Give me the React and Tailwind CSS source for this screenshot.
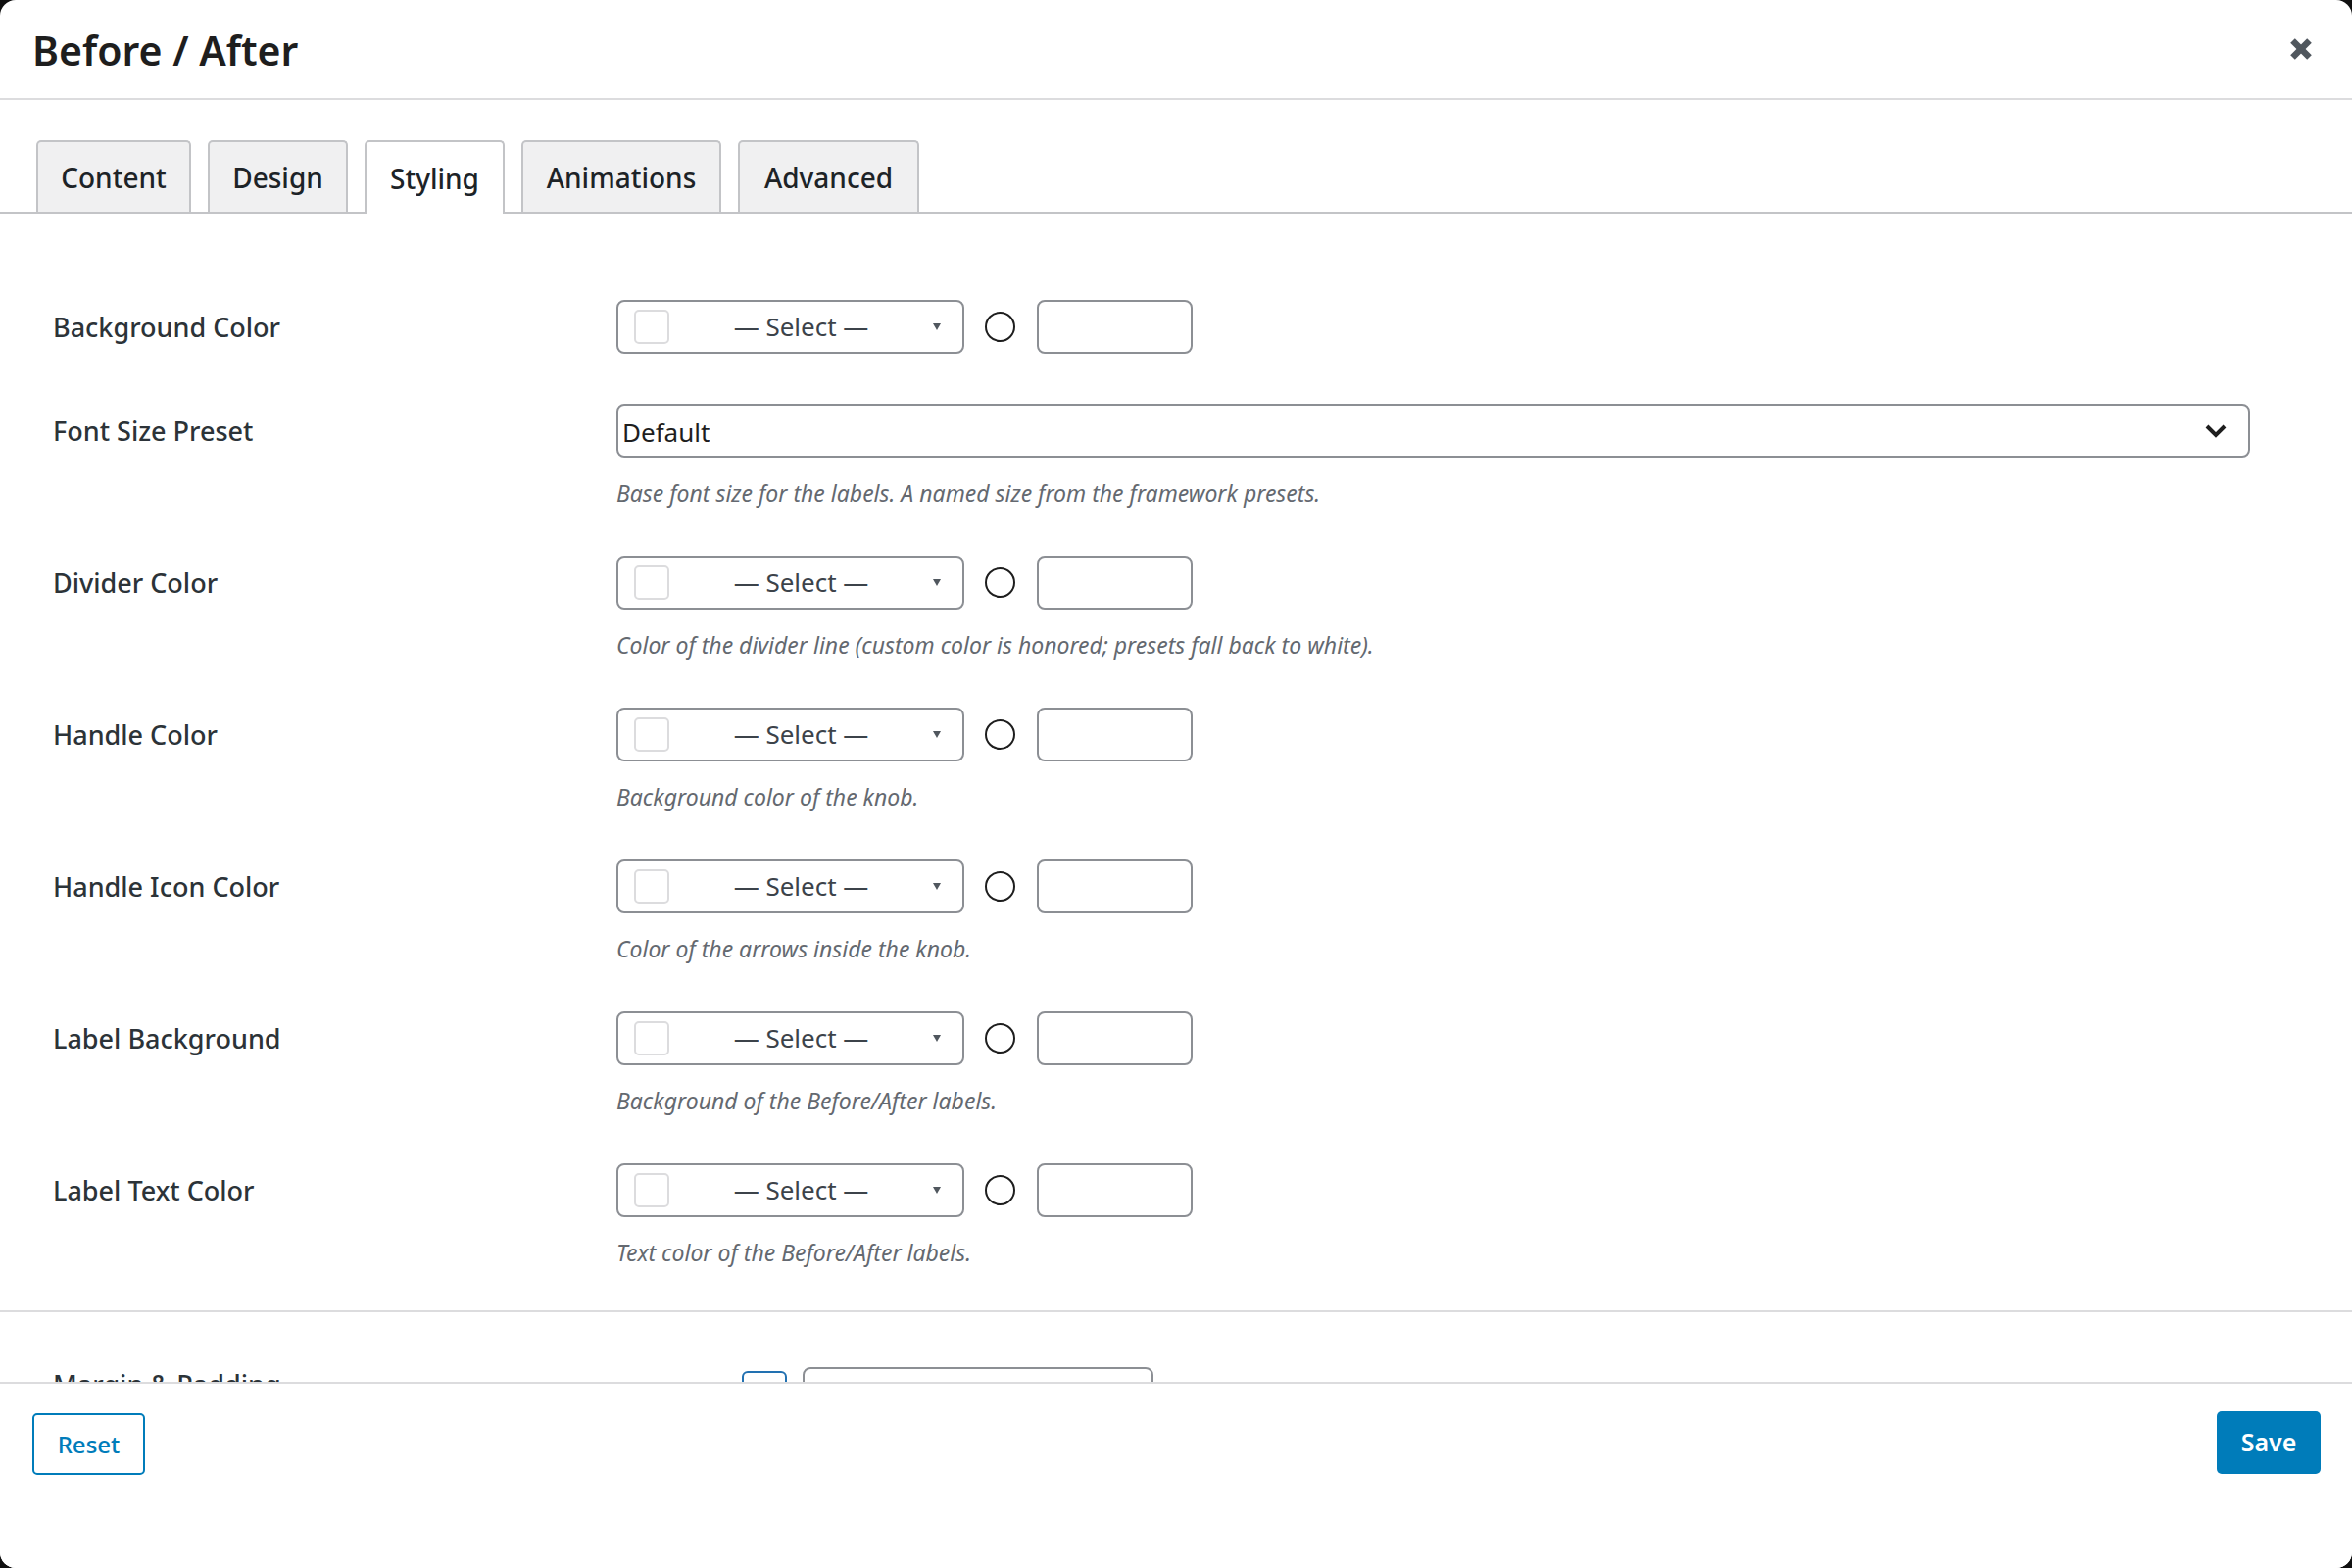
import React from "react";

const rows = [
  { label: "Background Color", type: "color" },
  {
    label: "Font Size Preset",
    type: "select",
    help: "Base font size for the labels. A named size from the framework presets.",
  },
  {
    label: "Divider Color",
    type: "color",
    help: "Color of the divider line (custom color is honored; presets fall back to white).",
  },
  { label: "Handle Color", type: "color", help: "Background color of the knob." },
  { label: "Handle Icon Color", type: "color", help: "Color of the arrows inside the knob." },
  { label: "Label Background", type: "color", help: "Background of the Before/After labels." },
  { label: "Label Text Color", type: "color", help: "Text color of the Before/After labels." },
];

const tabs = [
  { name: "Content", w: "w-[158px]", active: false },
  { name: "Design", w: "w-[143px]", active: false },
  { name: "Styling", w: "w-[143px]", active: true },
  { name: "Animations", w: "w-[204px]", active: false },
  { name: "Advanced", w: "w-[185px]", active: false },
];

function ColorControl() {
  return (
    <div className="flex items-center h-[55px]">
      <div className="flex items-center w-[355px] h-[55px] border-2 border-[#8c8f94] rounded-[8px] pl-[16px] pr-[22px] bg-white">
        <div className="w-[36px] h-[35px] border-2 border-[#dcdcde] rounded-[5px] shrink-0" />
        <div className="flex-1 text-center text-[26px] text-[#3c434a]">— Select —</div>
        <svg width="8" height="7" viewBox="0 0 8 7" className="shrink-0">
          <polygon points="0,0 8,0 4,7" fill="#50575e" />
        </svg>
      </div>
      <div className="ml-[21px] w-[31px] h-[31px] rounded-full border-2 border-[#1e1e1e]" />
      <div className="ml-[22px] w-[159px] h-[55px] border-2 border-[#8c8f94] rounded-[8px] bg-white" />
    </div>
  );
}

function SelectControl() {
  return (
    <div className="flex items-center justify-between h-[55px] w-full border-2 border-[#8c8f94] rounded-[8px] pl-[4px] pr-[22px] bg-white">
      <span className="text-[26px] text-[#1e1e1e] pt-[4px]">Default</span>
      <svg width="22" height="14" viewBox="0 0 22 14">
        <polyline points="2,2 11,11 20,2" fill="none" stroke="#1e1e1e" strokeWidth="4" />
      </svg>
    </div>
  );
}

export default function App() {
  return (
    <div className="w-[2400px] h-[1600px] bg-[#101010] font-['Noto_Sans','Open_Sans',sans-serif]">
      <div className="w-full h-full bg-white rounded-[16px] flex flex-col overflow-hidden">
        {/* Header */}
        <div className="h-[102px] shrink-0 flex items-center justify-between pl-[33px] pr-[41px] border-b-2 border-[#dcdcde]">
          <h1 className="text-[41px] font-semibold text-[#1e1e1e] leading-none pt-[3px]">Before / After</h1>
          <svg width="22" height="22" viewBox="0 0 22 22">
            <line x1="2.5" y1="2.5" x2="19.5" y2="19.5" stroke="#50575e" strokeWidth="6.5" />
            <line x1="19.5" y1="2.5" x2="2.5" y2="19.5" stroke="#50575e" strokeWidth="6.5" />
          </svg>
        </div>

        {/* Tabs */}
        <div className="shrink-0 pt-[41px]">
          <div className="flex items-end gap-[17px] pl-[37px] border-b-2 border-[#c3c4c7]">
            {tabs.map((t) =>
              t.active ? (
                <div
                  key={t.name}
                  className={`${t.w} h-[75px] -mb-[2px] bg-white border-2 border-b-0 border-[#c3c4c7] rounded-t-[5px] flex items-center justify-center text-[28px] font-medium text-[#1d2327]`}
                >
                  {t.name}
                </div>
              ) : (
                <div
                  key={t.name}
                  className={`${t.w} h-[73px] bg-[#f0f0f1] border-2 border-b-0 border-[#c3c4c7] rounded-t-[5px] flex items-center justify-center text-[28px] font-medium text-[#1d2327]`}
                >
                  {t.name}
                </div>
              )
            )}
          </div>
        </div>

        {/* Content */}
        <div className="flex-1 overflow-hidden">
          <div className="pl-[54px] pr-[104px] pt-[88px] pb-[45px] flex flex-col gap-[50px]">
            {rows.map((r) => (
              <div key={r.label} className={r.help ? "flex items-start" : "flex items-start mb-[1px]"}>
                <div className="w-[575px] shrink-0 leading-[55px] text-[27px] font-medium text-[#2c3338]">
                  {r.label}
                </div>
                <div className="flex-1">
                  {r.type === "select" ? <SelectControl /> : <ColorControl />}
                  {r.help && (
                    <p className="mt-[19px] -mb-[3px] leading-[34px] text-[23px] italic text-[#646970]">{r.help}</p>
                  )}
                </div>
              </div>
            ))}
          </div>
          <div className="border-t-2 border-[#dcdcde] pl-[54px] pt-[56px] flex items-start">
            <div className="w-[703px] shrink-0 leading-[36px] text-[27px] font-medium text-[#2c3338]">
              Margin &amp; Padding
            </div>
            <div className="mt-[4px] w-[46px] h-[60px] border-2 border-[#2271b1] rounded-[6px] shrink-0" />
            <div className="ml-[16px] w-[358px] h-[200px] border-2 border-[#8c8f94] rounded-[8px] shrink-0" />
          </div>
        </div>

        {/* Footer */}
        <div className="h-[190px] shrink-0 border-t-2 border-[#dcdcde] bg-white flex items-start justify-between pl-[33px] pr-[32px] pt-[30px]">
          <button className="w-[115px] h-[63px] border-2 border-[#007cba] rounded-[5px] text-[24px] font-medium text-[#007cba] bg-white">
            Reset
          </button>
          <button className="-mt-[2px] w-[106px] h-[64px] rounded-[5px] bg-[#007cba] text-[25px] font-semibold text-white">
            Save
          </button>
        </div>
      </div>
    </div>
  );
}
